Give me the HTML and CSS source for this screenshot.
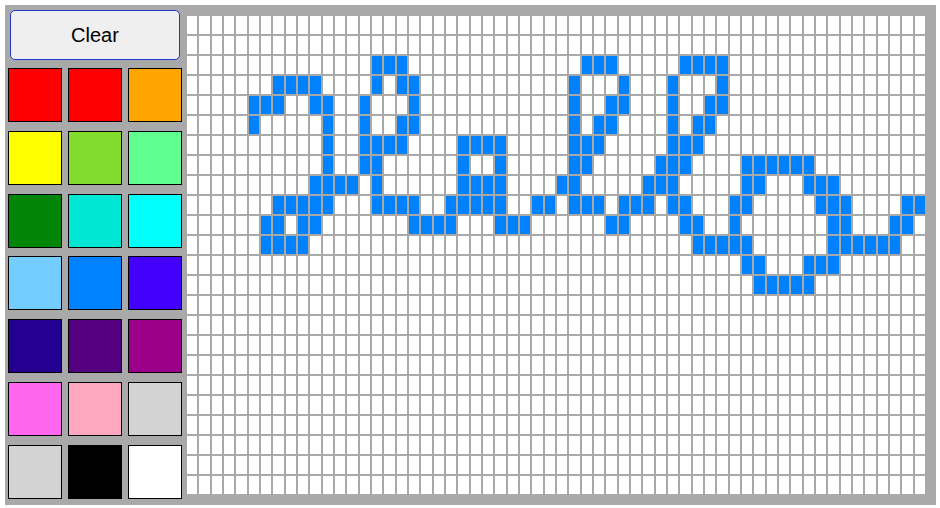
FILE: index.html
```html
<!DOCTYPE html>
<html lang="en">
<head>
<meta charset="utf-8">
<title>Pixel Painter</title>
<link rel="stylesheet" href="styles.css">
</head>
<body>
<main class="app">
  <aside class="sidebar">
    <button class="clear" type="button">Clear</button>
    <div class="palette">
      <div class="swatch c-red"></div>
      <div class="swatch c-red"></div>
      <div class="swatch c-orange"></div>
      <div class="swatch c-yellow"></div>
      <div class="swatch c-lime"></div>
      <div class="swatch c-mint"></div>
      <div class="swatch c-green"></div>
      <div class="swatch c-turquoise"></div>
      <div class="swatch c-cyan"></div>
      <div class="swatch c-sky"></div>
      <div class="swatch c-blue"></div>
      <div class="swatch c-violet"></div>
      <div class="swatch c-navy"></div>
      <div class="swatch c-indigo"></div>
      <div class="swatch c-purple"></div>
      <div class="swatch c-magenta"></div>
      <div class="swatch c-pink"></div>
      <div class="swatch c-silver"></div>
      <div class="swatch c-silver"></div>
      <div class="swatch c-black"></div>
      <div class="swatch c-white"></div>
    </div>
  </aside>
  <section class="canvas" id="canvas"></section>
</main>
<script src="script.js"></script>
</body>
</html>
```
FILE: styles.css
```css
html, body {
  margin: 0;
  padding: 0;
  background: #fff;
}

body {
  padding: 5px 4px 3px 5px;
}

.app {
  display: flex;
  width: 931px;
  height: 500px;
  background: #a9a9a9;
}

.sidebar {
  display: flex;
  flex-direction: column;
  flex: 0 0 182px;
  box-sizing: border-box;
  padding: 5px 5px 6px 3px;
}

.clear {
  flex: 0 0 50px;
  box-sizing: border-box;
  width: 170px;
  margin: 0 0 8px 2px;
  padding: 0;
  background: #efefef;
  border: 1px solid #2238c8;
  border-radius: 5px;
  color: #000;
  font: 20px "Liberation Sans", Arial, sans-serif;
}

.palette {
  flex: 1;
  display: grid;
  grid-template-columns: repeat(3, 54px);
  grid-auto-rows: 54px;
  justify-content: space-between;
  align-content: space-between;
}

.swatch {
  box-sizing: border-box;
  border: 1px solid #000;
}

.c-red { background: #ff0000; }
.c-orange { background: #ffa500; }
.c-yellow { background: #ffff00; }
.c-lime { background: #82dc2e; }
.c-mint { background: #5fff90; }
.c-green { background: #008508; }
.c-turquoise { background: #00e8d5; }
.c-cyan { background: #00ffff; }
.c-sky { background: #73cdff; }
.c-blue { background: #0082ff; }
.c-violet { background: #4400ff; }
.c-navy { background: #240090; }
.c-indigo { background: #550080; }
.c-purple { background: #9b008a; }
.c-magenta { background: #ff66ee; }
.c-pink { background: #ffa9c0; }
.c-silver { background: #d3d3d3; }
.c-black { background: #000; }
.c-white { background: #fff; }

.canvas {
  flex: 1;
  box-sizing: border-box;
  padding: 11px 11px 11px 0;
  display: grid;
  grid-template-columns: repeat(60, 1fr);
  grid-template-rows: repeat(24, 1fr);
  gap: 2px;
}

.cell {
  background: #fff;
}

.cell.on {
  background: #0082ff;
}
```
FILE: script.js
```js
var COLS = 60;
var ROWS = 24;
var painted = {
  2: [15, 16, 17, 32, 33, 34, 40, 41, 42, 43],
  3: [7, 8, 9, 10, 15, 17, 18, 31, 35, 39, 43],
  4: [5, 6, 7, 10, 11, 14, 18, 31, 34, 35, 39, 42, 43],
  5: [5, 11, 14, 17, 18, 31, 33, 34, 39, 41, 42],
  6: [11, 14, 15, 16, 17, 22, 23, 24, 25, 31, 32, 33, 39, 40, 41],
  7: [11, 14, 15, 22, 25, 31, 32, 38, 39, 40, 45, 46, 47, 48, 49, 50],
  8: [10, 11, 12, 13, 15, 22, 23, 24, 25, 30, 31, 37, 38, 39, 45, 46, 50, 51, 52],
  9: [7, 8, 9, 10, 11, 15, 16, 17, 18, 21, 22, 23, 24, 25, 28, 29, 31, 32, 33, 35, 36, 37, 39, 40, 44, 45, 51, 52, 53, 58, 59],
  10: [6, 7, 9, 10, 18, 19, 20, 21, 25, 26, 27, 34, 35, 40, 41, 44, 52, 53, 57, 58],
  11: [6, 7, 8, 9, 41, 42, 43, 44, 45, 52, 53, 54, 55, 56, 57],
  12: [45, 46, 50, 51, 52],
  13: [46, 47, 48, 49, 50]
};

var canvas = document.getElementById('canvas');
for (var r = 0; r < ROWS; r++) {
  for (var c = 0; c < COLS; c++) {
    var cell = document.createElement('div');
    cell.className = 'cell';
    if (painted[r] && painted[r].indexOf(c) !== -1) {
      cell.className += ' on';
    }
    canvas.appendChild(cell);
  }
}
```
